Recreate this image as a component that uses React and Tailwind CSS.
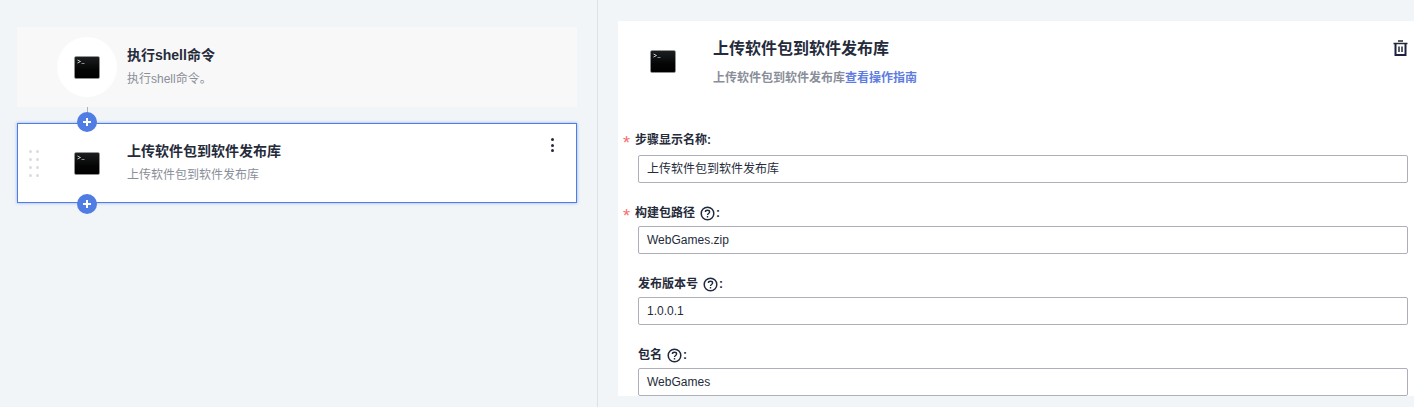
const FONT = "font-['Liberation_Sans','Noto_Sans_CJK_SC',sans-serif]";

function Term({ id }) {
  return (
    <svg width="26" height="23" viewBox="0 0 26 23" className="block shrink-0">
      <defs>
        <linearGradient id={id} x1="0" y1="0" x2="0" y2="1">
          <stop offset="0" stopColor="#1c2022" />
          <stop offset="0.6" stopColor="#050505" />
          <stop offset="1" stopColor="#000000" />
        </linearGradient>
      </defs>
      <rect x="0.5" y="0.5" width="25" height="22" rx="1.5" fill={`url(#${id})`} stroke="#9a9a9a" strokeWidth="0.6" />
      <path d="M3.5 4 L6.5 5.5 L3.5 7" fill="none" stroke="#d8d8d8" strokeWidth="0.9" />
      <rect x="7.5" y="7" width="3" height="1" fill="#8a8a8a" />
    </svg>
  );
}

function Plus({ className }) {
  return (
    <div className={`absolute z-10 flex h-5 w-5 items-center justify-center rounded-full bg-[#4f7de4] ${className}`}>
      <svg width="10" height="10" viewBox="0 0 10 10">
        <path d="M5 1 V9 M1 5 H9" stroke="#fff" strokeWidth="2" />
      </svg>
    </div>
  );
}

function Help() {
  return (
    <svg width="15" height="15" viewBox="0 0 15 15" className="ml-[5px] shrink-0">
      <circle cx="7.5" cy="7.5" r="6.3" fill="none" stroke="#1f2a3d" strokeWidth="1.5" />
      <path d="M5.4 6 C5.4 3.7 9.6 3.7 9.6 6 C9.6 7.6 7.5 7.4 7.5 9.1" fill="none" stroke="#1f2a3d" strokeWidth="1.4" />
      <rect x="6.8" y="10" width="1.4" height="1.5" fill="#1f2a3d" />
    </svg>
  );
}

function Field({ label, value, required, help, className, gap }) {
  return (
    <div className={`pr-[6px] ${className}`}>
      <div className={`relative flex h-[16px] items-center text-[12px] font-bold leading-[16px] text-[#252b3a] ${required ? "pl-[17px]" : "pl-[20px]"} ${gap}`}>
        {required && <span className="absolute left-[5px] top-[2px] text-[18px] font-normal leading-[18px] text-[#f66f6a]">*</span>}
        <span>{label}</span>
        {help && <Help />}
        <span className={help ? "ml-[1px]" : ""}>:</span>
      </div>
      <div className="ml-[20px] flex h-[28px] items-center rounded-[2px] border border-[#adb0b8] bg-white px-[8px] text-[12px] text-[#252b3a]">
        {value}
      </div>
    </div>
  );
}

export default function App() {
  return (
    <div className={`${FONT} flex h-[407px] w-[1414px] overflow-hidden bg-[#f1f5f8]`}>
      <div className="relative h-full w-[598px] shrink-0 border-r border-[#dfe1e6] pl-[17px] pr-[20px] pt-[27px]">
        <div className="flex h-[80px] w-[560px] items-center bg-[#f8f8f8] pl-[40px]">
          <div className="flex h-[60px] w-[60px] shrink-0 items-center justify-center rounded-full bg-white">
            <Term id="t1" />
          </div>
          <div className="ml-[10px] -mt-[1px]">
            <div className="text-[14px] font-bold leading-[18px] text-[#252b3a]">执行shell命令</div>
            <div className="mt-[7px] text-[12px] leading-[16px] text-[#8a8e99]">执行shell命令。</div>
          </div>
        </div>
        <div className="mx-[69.5px] h-[16px] w-px bg-[#adb0b8]" />
        <div className="relative flex h-[80px] w-[560px] items-center border border-[#4f7de4] bg-white pl-[11px] shadow-[0_0_3px_rgba(79,125,228,0.6)]">
          <div className="grid grid-cols-2 gap-x-[4px] gap-y-[5px]">
            {[0, 1, 2, 3, 4, 5, 6, 7].map((i) => (
              <span key={i} className="h-[3px] w-[3px] rounded-full bg-[#dcdcdc]" />
            ))}
          </div>
          <div className="ml-[35px]">
            <Term id="t2" />
          </div>
          <div className="ml-[27px] -mt-[1px]">
            <div className="text-[14px] font-bold leading-[18px] text-[#252b3a]">上传软件包到软件发布库</div>
            <div className="mt-[7px] text-[12px] leading-[16px] text-[#8a8e99]">上传软件包到软件发布库</div>
          </div>
          <div className="absolute right-[22px] top-[14px] flex flex-col gap-[2.5px]">
            <span className="h-[3px] w-[3px] rounded-full bg-[#252b3a]" />
            <span className="h-[3px] w-[3px] rounded-full bg-[#252b3a]" />
            <span className="h-[3px] w-[3px] rounded-full bg-[#252b3a]" />
          </div>
        </div>
        <Plus className="top-[112px] left-[77px]" />
        <Plus className="top-[194px] left-[77px]" />
      </div>

      <div className="ml-[20px] mt-[21px] h-[375px] flex-1 overflow-hidden bg-white">
        <div className="relative flex h-[103px] items-start">
          <div className="ml-[32px] mt-[29px]">
            <Term id="t3" />
          </div>
          <div className="ml-[37px] mt-[17px]">
            <div className="text-[16px] font-bold leading-[22px] text-[#252b3a]">上传软件包到软件发布库</div>
            <div className="mt-[10px] text-[12px] font-bold leading-[16px] text-[#8a8e99]">
              上传软件包到软件发布库<span className="text-[#5e7ce0]">查看操作指南</span>
            </div>
          </div>
          <svg width="15" height="16" viewBox="0 0 15 16" className="absolute left-[775px] top-[19px]">
            <path d="M5 1 H10 M0.5 3.5 H14.5" stroke="#252b3a" strokeWidth="1.6" fill="none" />
            <path d="M2.5 3.5 V15 H12.5 V3.5" stroke="#1a2240" strokeWidth="2" fill="none" />
            <path d="M6 6.5 V12 M9 6.5 V12" stroke="#252b3a" strokeWidth="1.5" fill="none" />
          </svg>
        </div>
        <Field className="mt-[8px]" gap="mb-[7px]" label="步骤显示名称" value="上传软件包到软件发布库" required />
        <Field className="mt-[22px]" gap="mb-[5px]" label="构建包路径" value="WebGames.zip" required help />
        <Field className="mt-[22px]" gap="mb-[5px]" label="发布版本号" value="1.0.0.1" help />
        <Field className="mt-[22px]" gap="mb-[5px]" label="包名" value="WebGames" help />
      </div>
    </div>
  );
}
